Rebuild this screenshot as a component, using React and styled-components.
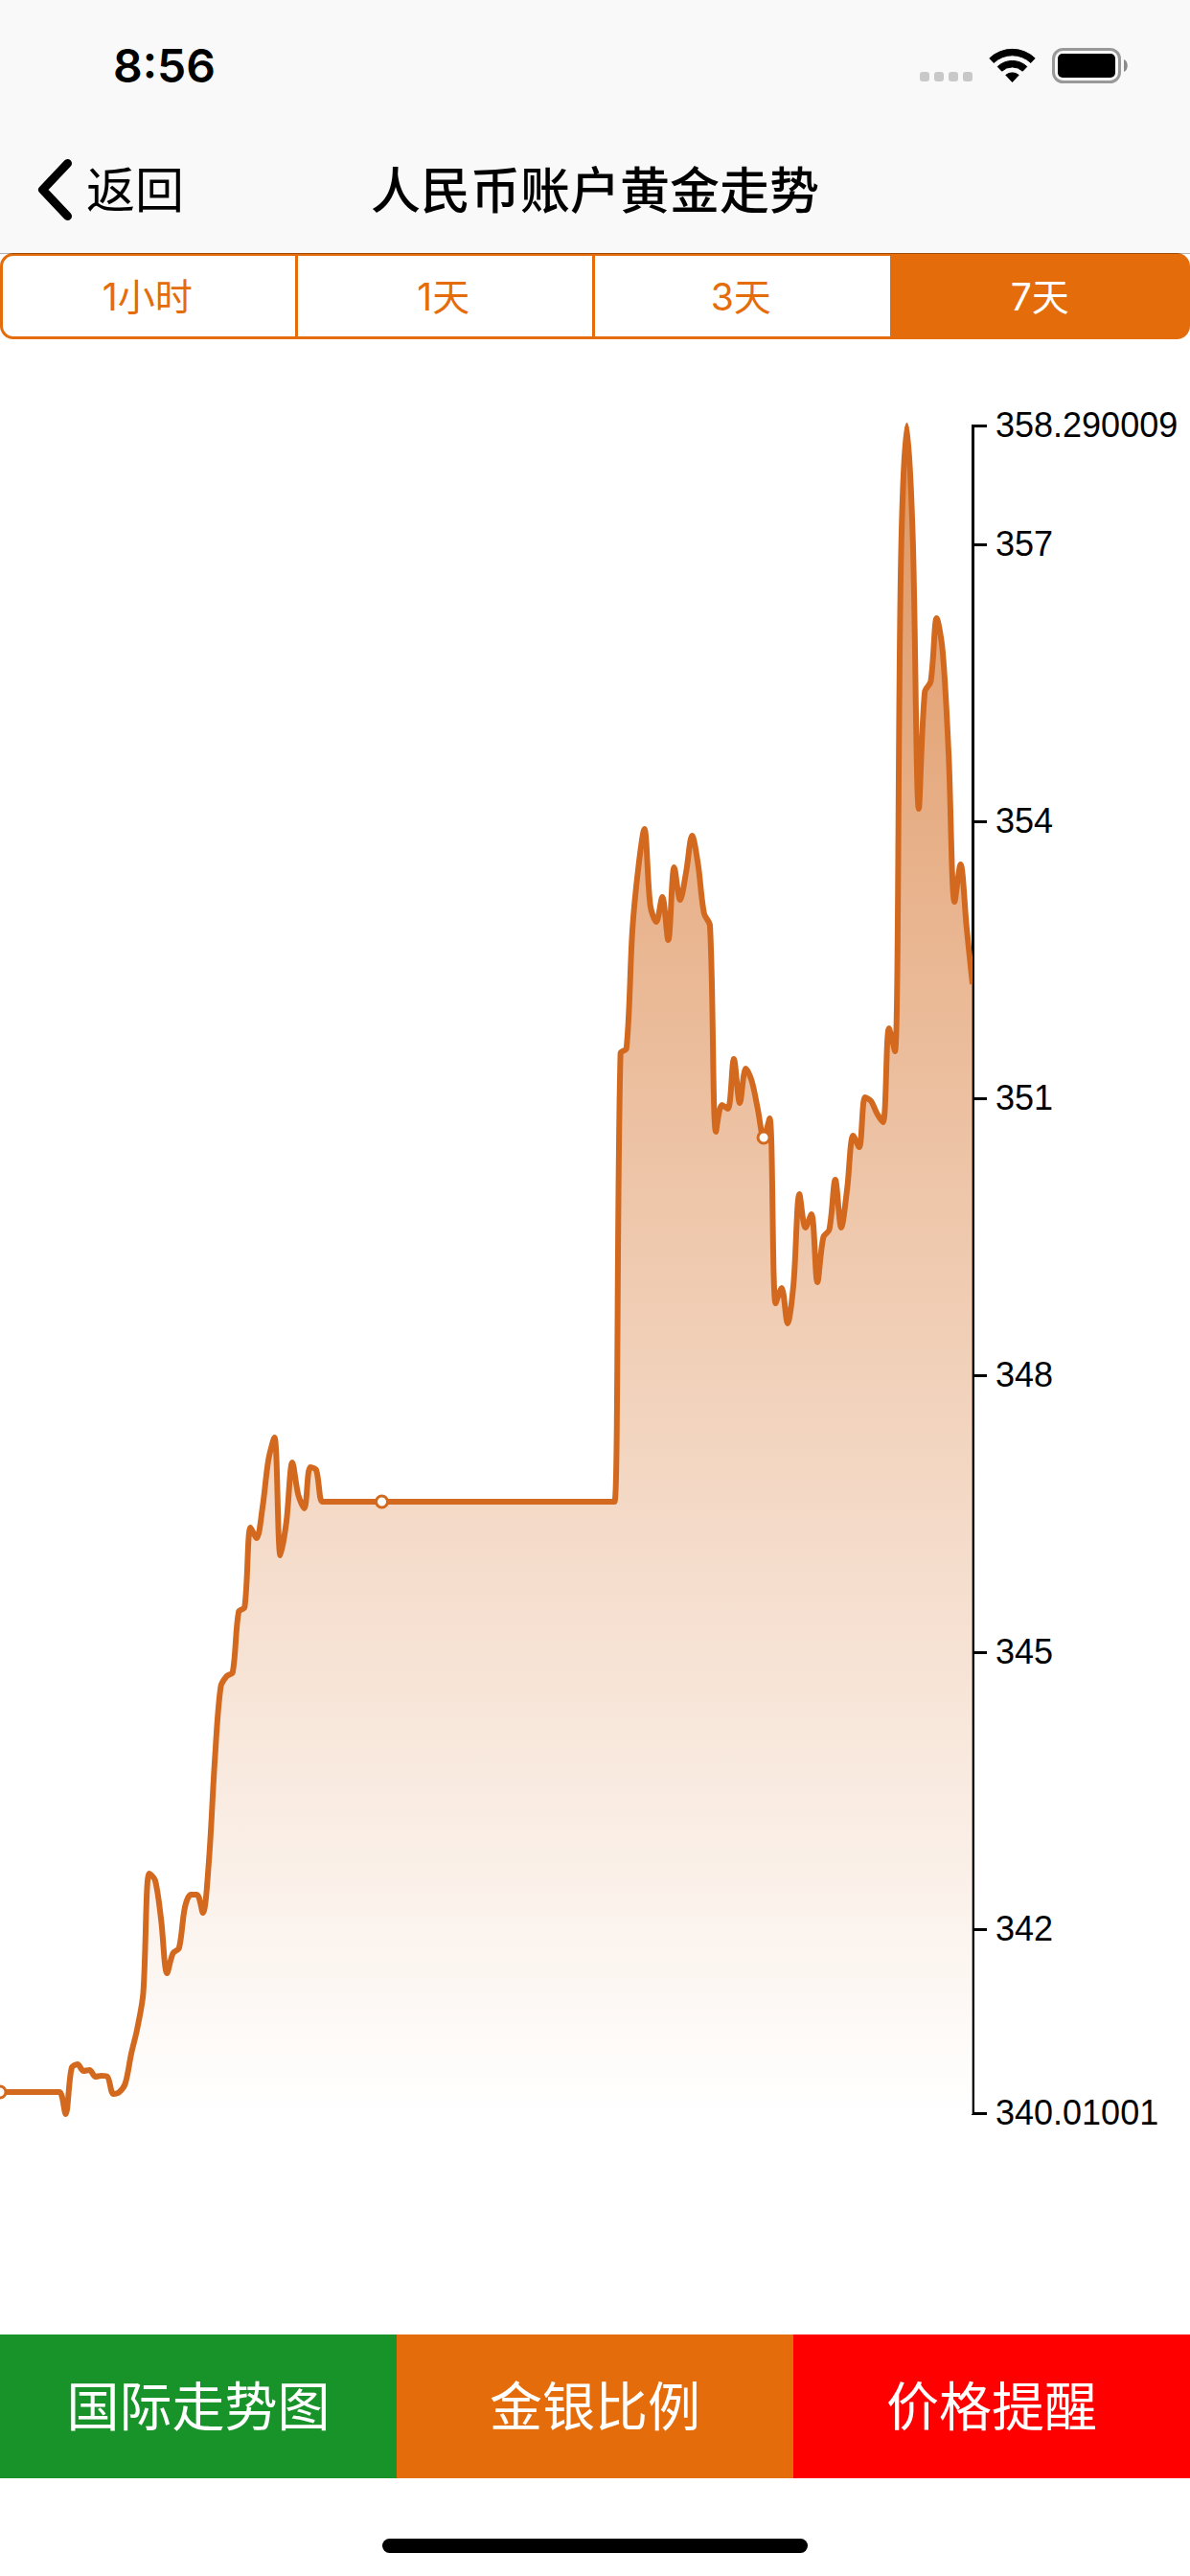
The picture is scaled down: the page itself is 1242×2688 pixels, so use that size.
import React, { useState } from 'react';
import styled, { createGlobalStyle } from 'styled-components';

const ORANGE = '#e46c0a';
const LINE = '#d2691e';

const PERIODS = ['1小时', '1天', '3天', '7天'];

const ACTIONS = [
  { label: '国际走势图', color: '#18932a' },
  { label: '金银比例', color: ORANGE },
  { label: '价格提醒', color: '#ff0000' },
];

const VIEW = { top: 354, width: 1242, height: 2082 };
const PLOT = { top: 445, bottom: 2206, right: 1015 };
const MIN = 340.01001;
const MAX = 358.290009;
const TICKS = [MAX, 357, 354, 351, 348, 345, 342, MIN];

const repeat = (value, times) => Array(times).fill(value);

// one level per hour, already in plot units
const LEVELS = [
  ...repeat(2183, 11),
  2206, 2158, 2154, 2161, 2160, 2167, 2166, 2167, 2185, 2183,
  2174, 2143, 2117, 2080, 1955, 1962, 2003, 2059, 2038, 2033,
  1990, 1977, 1977, 1996, 1943, 1837, 1760, 1749, 1745, 1682,
  1677, 1594, 1605, 1573, 1523, 1500, 1623, 1588, 1526, 1560,
  1574, 1531, 1534,
  ...repeat(1567, 50),
  1099, 1094, 970, 905, 865, 945, 962, 936, 981, 905,
  939, 910, 872, 902, 953, 966, 1181, 1153, 1157, 1105,
  1151, 1115, 1128, 1157, 1187, 1167, 1360, 1344, 1381, 1340,
  1246, 1281, 1267, 1338, 1291, 1283, 1231, 1281, 1240, 1185,
  1197, 1145, 1149, 1162, 1171, 1073, 1097, 587, 444, 563,
  844, 722, 711, 645, 680, 787, 941, 902, 967, 1027,
];

const STEP = PLOT.right / (LEVELS.length - 1);
const POINTS = LEVELS.map((y, i) => [i * STEP, y]);
const MARKS = [0, 64, 128];

const scaleY = value =>
  PLOT.bottom - ((value - MIN) / (MAX - MIN)) * (PLOT.bottom - PLOT.top);

const clamp = (v, a, b) => Math.max(Math.min(v, Math.max(a, b)), Math.min(a, b));

// smooth curve that never goes past its own points
function smoothPath(points, smooth = 0.32) {
  let path = `M${points[0].join(' ')}`;
  let out = points[0];
  for (let i = 1; i < points.length; i++) {
    const prev = points[i - 1];
    const p = points[i];
    const next = points[i + 1];
    let into = p;
    let nextOut = p;
    if (next) {
      const before = Math.hypot(p[0] - prev[0], p[1] - prev[1]);
      const after = Math.hypot(next[0] - p[0], next[1] - p[1]);
      const ratio = after / (after + before);
      nextOut = [0, 1].map(k =>
        clamp(p[k] + (next[k] - prev[k]) * smooth * ratio, p[k], next[k])
      );
      into = [0, 1].map(k =>
        clamp(p[k] - ((nextOut[k] - p[k]) * before) / after, p[k], prev[k])
      );
      nextOut = [0, 1].map(k => p[k] + ((p[k] - into[k]) * after) / before);
    }
    path += `C${[...out, ...into, ...p].map(n => n.toFixed(2)).join(' ')}`;
    out = nextOut;
  }
  return path;
}

const linePath = smoothPath(POINTS);
const areaPath = `${linePath}L${PLOT.right} ${PLOT.bottom}L0 ${PLOT.bottom}Z`;

const StatusIcons = () => (
  <Icons>
    <Signal>
      <i />
      <i />
      <i />
      <i />
    </Signal>
    <svg width="49" height="37" viewBox="0 0 49 37" aria-hidden="true">
      <g stroke="#000" strokeWidth="1" strokeLinejoin="round">
        <path d="M.8 10.8A34.5 34.5 0 0 1 48.2 10.8L43.8 15.5A28 28 0 0 0 5.2 15.5Z" />
        <path d="M9.2 19.5A22.3 22.3 0 0 1 39.8 19.5L35.3 24.2A15.8 15.8 0 0 0 13.7 24.2Z" />
        <path d="M17.8 28.3A10.5 10.5 0 0 1 31.2 28.3L24.5 35.5Z" />
      </g>
    </svg>
    <svg width="80" height="37" viewBox="0 0 80 37" aria-hidden="true">
      <rect
        x="1.5"
        y="1.5"
        width="69"
        height="34"
        rx="10"
        fill="none"
        stroke="#999"
        strokeWidth="3"
      />
      <rect x="6" y="6" width="60" height="25" rx="5" />
      <path d="M75 12C80 14 80 23 75 25Z" fill="#8a8a8a" />
    </svg>
  </Icons>
);

const TrendChart = () => (
  <Chart
    viewBox={`0 ${VIEW.top} ${VIEW.width} ${VIEW.height}`}
    role="img"
    aria-label="人民币账户黄金走势"
  >
    <defs>
      <linearGradient
        id="fill"
        gradientUnits="userSpaceOnUse"
        x1="0"
        y1={PLOT.top}
        x2="0"
        y2={PLOT.bottom}
      >
        <stop offset="0" stopColor={LINE} />
        <stop offset="1" stopColor="#fff" />
      </linearGradient>
      <clipPath id="plot">
        <rect x="0" y="441" width={PLOT.right} height="1769" />
      </clipPath>
    </defs>
    <g stroke="#000" strokeWidth="3">
      <path d={`M1015.5 443V${PLOT.bottom + 1}`} />
      {TICKS.map(tick => (
        <path key={tick} d={`M1015 ${Math.round(scaleY(tick)) - 0.5}h15`} />
      ))}
    </g>
    {TICKS.map(tick => (
      <TickLabel key={tick} x="1039" y={Math.round(scaleY(tick)) + 11}>
        {tick}
      </TickLabel>
    ))}
    <g clipPath="url(#plot)">
      <path d={areaPath} fill="url(#fill)" opacity="0.7" />
      <path
        d={linePath}
        fill="none"
        stroke={LINE}
        strokeWidth="6"
        strokeLinejoin="round"
      />
    </g>
    {MARKS.map(i => (
      <circle
        key={i}
        cx={POINTS[i][0]}
        cy={POINTS[i][1]}
        r="6"
        fill="#fff"
        stroke={LINE}
        strokeWidth="3"
      />
    ))}
  </Chart>
);

export default function App() {
  const [period, setPeriod] = useState('7天');

  return (
    <Page>
      <GlobalStyle />
      <Header>
        <StatusBar>
          <Time>8:56</Time>
          <StatusIcons />
        </StatusBar>
        <NavBar>
          <BackButton type="button">
            <svg width="38" height="64" viewBox="0 0 38 64" aria-hidden="true">
              <path
                d="M32.5 4.5L6.5 32L32.5 59.5"
                fill="none"
                stroke="#000"
                strokeWidth="9"
                strokeLinecap="round"
                strokeLinejoin="round"
              />
            </svg>
            <BackLabel>返回</BackLabel>
          </BackButton>
          <Title>人民币账户黄金走势</Title>
        </NavBar>
      </Header>
      <Segments>
        {PERIODS.map(label => (
          <Segment
            key={label}
            type="button"
            $active={label === period}
            aria-pressed={label === period}
            onClick={() => setPeriod(label)}
          >
            {label}
          </Segment>
        ))}
      </Segments>
      <Main>
        <TrendChart />
      </Main>
      <Actions>
        {ACTIONS.map(({ label, color }) => (
          <Action key={label} type="button" $color={color}>
            {label}
          </Action>
        ))}
      </Actions>
      <HomeArea>
        <HomeBar />
      </HomeArea>
    </Page>
  );
}

const GlobalStyle = createGlobalStyle`
  * {
    box-sizing: border-box;
  }

  body {
    margin: 0;
    background: #fff;
    color: #000;
    font-family: Inter, 'Noto Sans CJK SC', sans-serif;
  }

  button {
    margin: 0;
    padding: 0;
    border: 0;
    background: none;
    color: inherit;
    font: inherit;
  }
`;

const Page = styled.div`
  display: flex;
  flex-direction: column;
  min-height: 100vh;
`;

const Header = styled.header`
  position: relative;
  background: #f9f9f9;
  box-shadow: 0 1px 0 rgba(0, 0, 0, 0.3);
`;

const StatusBar = styled.div`
  display: flex;
  align-items: center;
  justify-content: space-between;
  height: 132px;
  padding: 4px 64px 0 118px;
`;

const Time = styled.span`
  font-size: 48px;
  font-weight: 600;
`;

const Icons = styled.div`
  display: flex;
  align-items: center;
  gap: 17px;
`;

const Signal = styled.div`
  display: flex;
  align-items: flex-end;
  gap: 5px;
  height: 37px;
  padding-bottom: 2px;

  i {
    width: 10px;
    height: 10px;
    border-radius: 3px;
    background: #c8c8c8;
  }
`;

const NavBar = styled.div`
  display: grid;
  grid-template-columns: 1fr auto 1fr;
  align-items: center;
  height: 132px;
  padding: 0 38px;
`;

const BackButton = styled.button`
  display: flex;
  align-items: center;
  justify-self: start;
  gap: 14px;
  font-size: 51px;
`;

const BackLabel = styled.span`
  padding-bottom: 6px;
`;

const Title = styled.h1`
  margin: 0;
  padding-bottom: 6px;
  font-size: 52px;
  font-weight: 500;
`;

const Segments = styled.div`
  display: grid;
  grid-template-columns: repeat(4, 1fr);
  height: 90px;
`;

const Segment = styled.button`
  padding: 0 3px 4px 0;
  border: 3px solid ${ORANGE};
  border-left-width: 0;
  background: ${props => (props.$active ? ORANGE : '#fff')};
  color: ${props => (props.$active ? '#fff' : ORANGE)};
  font-size: 39px;

  &:first-child {
    border-left-width: 3px;
    border-radius: 14px 0 0 14px;
  }

  &:last-child {
    padding-right: 0;
    border-radius: 0 14px 14px 0;
  }
`;

const Main = styled.main`
  flex: 1;
`;

const Chart = styled.svg`
  display: block;
  width: 100%;
`;

const TickLabel = styled.text`
  font-family: 'Liberation Sans', sans-serif;
  font-size: 36px;
`;

const Actions = styled.div`
  display: flex;
`;

const Action = styled.button`
  flex: 1;
  height: 150px;
  padding-bottom: 8px;
  background: ${props => props.$color};
  color: #fff;
  font-size: 55px;
`;

const HomeArea = styled.div`
  display: flex;
  justify-content: center;
  padding: 63px 0 24px;
`;

const HomeBar = styled.div`
  width: 444px;
  height: 15px;
  border-radius: 8px;
  background: #000;
`;
